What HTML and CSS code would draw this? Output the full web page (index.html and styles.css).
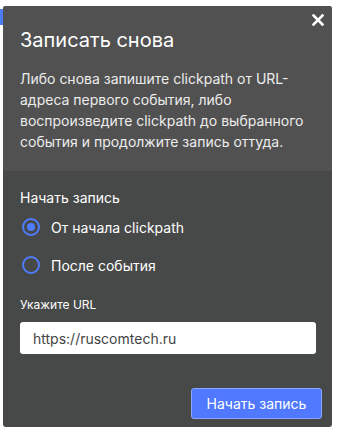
FILE: index.html
```html
<!DOCTYPE html>
<html lang="ru">
<head>
  <meta charset="UTF-8">
  <title>Записать снова</title>
  <link rel="stylesheet" href="styles.css">
</head>
<body>
  <!-- кусочек кнопки под диалогом -->
  <div class="behind"></div>

  <div class="dialog">
    <button class="close" aria-label="Закрыть">
      <svg width="12" height="12" viewBox="0 0 12 12"><path d="M1.5 1.5 L10.5 10.5 M10.5 1.5 L1.5 10.5" stroke="#fff" stroke-width="2.6" stroke-linecap="square"/></svg>
    </button>

    <div class="top">
      <h2>Записать снова</h2>
      <p>Либо снова запишите clickpath от URL-адреса первого события, либо воспроизведите clickpath до выбранного события и продолжите запись оттуда.</p>
    </div>

    <div class="body">
      <div class="label">Начать запись</div>
      <label class="radio checked"><span class="dot"></span>От начала clickpath</label>
      <label class="radio"><span class="dot"></span>После события</label>

      <div class="small">Укажите URL</div>
      <div class="input">https://ruscomtech.ru</div>

      <div class="actions">
        <button class="primary">Начать запись</button>
      </div>
    </div>
  </div>
</body>
</html>
```

FILE: styles.css
```css
/* Общее */
body {
  margin: 0;
  padding: 6px 0 0 3px;
  background: #fff;
  font-family: 'Inter', 'Roboto', sans-serif;
  position: relative;
  height: 434px;
  box-sizing: border-box;
  overflow: hidden;
}

.behind {
  position: absolute;
  left: 0;
  top: 9px;
  width: 4px;
  height: 16px;
  background: #4c7cf4;
}

/* Диалог */
.dialog {
  position: relative;
  width: 329px;
  height: 421px;
  border-radius: 3px;
  overflow: hidden;
  background: #474948;
  display: flex;
  flex-direction: column;
  color: #fff;
}

.close {
  position: absolute;
  top: 8px;
  right: 8px;
  background: none;
  border: none;
  padding: 0;
  width: 12px;
  height: 12px;
  cursor: pointer;
}

.top {
  background: #515151;
  padding: 22px 17px 0 17px;
  height: 165px;
  box-sizing: border-box;
}

.top h2 {
  margin: 0;
  font-size: 20px;
  font-weight: 400;
  line-height: 24px;
}

.top p {
  margin: 16px 0 0;
  font-size: 14px;
  line-height: 21px;
  color: #ececec;
}

/* Нижняя часть */
.body {
  padding: 17px 17px 0 17px;
  display: flex;
  flex-direction: column;
}

.label {
  font-size: 14px;
  line-height: 20px;
}

.radio {
  display: flex;
  align-items: center;
  gap: 11px;
  font-size: 14px;
  height: 38px;
  padding-left: 2px;
}

.dot {
  width: 14px;
  height: 14px;
  border: 2px solid #4f7cff;
  border-radius: 50%;
  display: flex;
  align-items: center;
  justify-content: center;
}

.radio.checked .dot::after {
  content: "";
  width: 8px;
  height: 8px;
  border-radius: 50%;
  background: #4f7cff;
}

.small {
  font-size: 12px;
  line-height: 18px;
  margin-top: 12px;
}

.input {
  margin-top: 8px;
  margin-right: -1px;
  height: 32px;
  box-sizing: border-box;
  background: #fff;
  border-radius: 3px;
  padding: 0 13px;
  display: flex;
  align-items: center;
  font-size: 14px;
  color: #444;
}

.actions {
  display: flex;
  justify-content: flex-end;
  margin-top: 34px;
  margin-right: -7px;
}

.primary {
  background: #5079ff;
  border: 1px solid #8aa6ff;
  border-radius: 3px;
  color: #fff;
  font-family: inherit;
  font-size: 14px;
  height: 31px;
  width: 131px;
  cursor: pointer;
}
```
